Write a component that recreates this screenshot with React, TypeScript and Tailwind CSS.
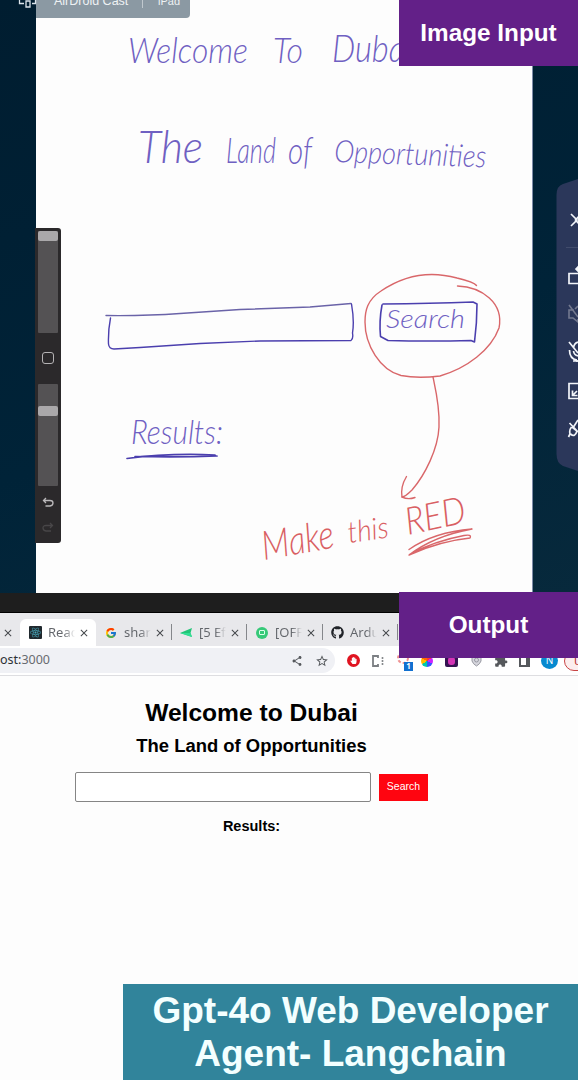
import type { ReactNode } from "react";
import { MdClose, MdShare, MdStarBorder, MdExtension } from "react-icons/md";
import { FcGoogle } from "react-icons/fc";
import { FaGithub, FaReact, FaHandPaper } from "react-icons/fa";

type InkWord = { text: string; x: number; y: number; w: number; size: number; angle?: number };

const blueWords: InkWord[] = [
  { text: "Welcome", x: 128, y: 63, w: 120, size: 36 },
  { text: "To", x: 273, y: 63, w: 30, size: 36 },
  { text: "Dubai", x: 332, y: 62, w: 80, size: 38 },
  { text: "The", x: 138, y: 163, w: 65, size: 46 },
  { text: "Land", x: 226, y: 163, w: 50, size: 36 },
  { text: "of", x: 288, y: 164, w: 24, size: 38 },
  { text: "Opportunities", x: 334, y: 162, w: 152, size: 31, angle: 2 },
  { text: "Search", x: 386, y: 328, w: 79, size: 26 },
  { text: "Results:", x: 131, y: 444, w: 92, size: 34 },
];

const redWords: InkWord[] = [
  { text: "Make", x: 264, y: 560, w: 73, size: 40, angle: -10 },
  { text: "this", x: 349, y: 543, w: 41, size: 30, angle: -8 },
  { text: "RED", x: 408, y: 535, w: 61, size: 38, angle: -12 },
];

function Ink({ words, color }: { words: InkWord[]; color: string }) {
  return (
    <g fill={color} fontFamily="Lato, 'Open Sans', sans-serif" fontStyle="italic" fontWeight={300}>
      {words.map((w) => (
        <text
          key={w.text}
          x={w.x}
          y={w.y}
          fontSize={w.size}
          textLength={w.w}
          lengthAdjust="spacingAndGlyphs"
          transform={`rotate(${w.angle ?? 0} ${w.x} ${w.y})`}
        >
          {w.text}
        </text>
      ))}
    </g>
  );
}

function Sketch() {
  return (
    <svg className="absolute inset-0" width="578" height="593" viewBox="0 0 578 593" fill="none" strokeLinecap="round" strokeLinejoin="round">
      <Ink words={blueWords} color="#6f60c2" />
      <Ink words={redWords} color="#d95f63" />
      <g stroke="#4b3fae" strokeWidth="1.4">
        <path d="M106 315.5Q145 316 180 313.500L240 309.500L310 307L351 303.500" stroke="#6a63a8" />
        <path d="M110.500 318Q108 331 108.500 344Q109 349 114 349L140 347.500L200 343.500L260 341L351 340.500Q353.500 339 352.500 333Q354.500 321 351.500 304" />
        <path d="M383 304Q430 303.500 473 302L477 304Q477 323 474.500 342L471 340.500Q430 341.500 388 340.500L380.500 336.500Q379 321 382 305" strokeWidth="1.6" />
        <path d="M127 458.500Q168 453 215 455M135 456.500Q180 457.500 217 456" strokeWidth="1.7" />
      </g>
      <g stroke="#d9676a" strokeWidth="1.4">
        <path d="M476.500 285.500Q474 282 457 278C428 270 403 276 381 291C367 300 365 311 365 322C365 345 380 370 401 375.500C414 378 427 377.500 440 376C467 368 491 350 499 328C504 303 482 287 457.500 286" />
        <path d="M433 377C436 391 440 408 439 427C438 449 425 475 412 490C408 494 404 497 402 497" />
        <path d="M406.500 476.500C402 484 401 491 402 497Q408 500 415 497.500" />
        <path d="M409 549.500Q434 532 472 529Q434 536 409 555Q440 541 470 538Q472 534 464 535.500Q435 541 410 554" />
      </g>
    </svg>
  );
}

function BrushPanel() {
  return (
    <div className="absolute left-[35px] top-[228px] flex h-[315px] w-[26px] flex-col items-center rounded-r-[3px] bg-[#2b292b] pt-[3px]">
      <div className="h-[102px] w-[20px] rounded-[1px] bg-[#545254]">
        <div className="h-[10px] w-full rounded-[2px] bg-[#aaa8aa]" />
      </div>
      <div className="mt-[19px] h-[12px] w-[12px] rounded-[3px] border border-[#b5b3b5]" />
      <div className="mt-[20px] h-[102px] w-[20px] rounded-[1px] bg-[#545254] pt-[22px]">
        <div className="h-[10px] w-full rounded-[2px] bg-[#aaa8aa]" />
      </div>
      <svg className="mt-[11px]" width="12" height="11" viewBox="0 0 12 11" fill="none" stroke="#bbb9bb" strokeWidth="1.3">
        <path d="M4 1L1.500 3.500L4 6M2 3.500H8Q11 3.500 11 6T8 9H3.500" />
      </svg>
      <svg className="mt-[14px]" width="12" height="11" viewBox="0 0 12 11" fill="none" stroke="#484648" strokeWidth="1.3">
        <path d="M8 1L10.500 3.500L8 6M10 3.500H4Q1 3.500 1 6T4 9H9" />
      </svg>
    </div>
  );
}

function CastPanel() {
  return (
    <svg className="absolute right-0 top-[177px]" width="22" height="296" viewBox="0 0 22 296" fill="none">
      <path d="M22 2L7 7Q0.500 9 0.500 18V277Q0.500 286 7 289L22 294Z" fill="#2b375a" />
      <path d="M10 70.500H22" stroke="#414c6c" />
      <g stroke="#f2f5fa" strokeWidth="1.7">
        <path d="M15 37L21 43L15 49M24 38L19.500 43L24 48" />
        <path d="M22 96.500H13V106.500H22" />
        <path d="M20 92L22.500 89.500V94.500Z" fill="#f2f5fa" />
        <path d="M13 165L22 176M22 165Q18 166 17.500 171M13.500 173Q13.500 182 21 183M17.500 174Q18 178 22 179M21 183V185M17 184H22" />
        <path d="M22 206.500H13V221.500H22M16.500 213.500V218.500H21.500M17 218L21 214" />
        <path d="M13.500 246L22 255M22 243L17.500 250M15.500 250Q13 253 14 257L12.500 260M14.500 257Q19 261 21 254M16 250L21 254" />
      </g>
      <path d="M13 128L22 140M22 129L19 132M18 133H13V141H17L22 145V142" stroke="#73798f" strokeWidth="1.600" />
    </svg>
  );
}

function Whiteboard() {
  return (
    <section className="relative h-[593px] w-full overflow-hidden bg-[linear-gradient(160deg,#001d30,#002338_60%,#07293c)] pl-[35.500px]">
      <div className="h-full w-[497px] border-r border-[#7d8ba8] bg-[#fdfdfd]" />
      <div className="absolute left-[36px] top-0 h-[18px] w-[154px] rounded-br-[4px] bg-[#8b99a3]" />
      <svg className="absolute left-[18px] top-0" width="19" height="9" viewBox="0 0 19 9" fill="none" stroke="#dbe4eb" strokeWidth="1.300">
        <path d="M1.500 0V3.500H6M17.500 0V3.500H14M8 1H12V7H8Z" />
      </svg>
      <div className="absolute left-[54px] top-[-8px] flex h-[18px] items-center whitespace-nowrap text-[#eef2f4]">
        <span className="w-[88px] text-[12.500px]">AirDroid Cast</span>
        <span className="h-[14px] w-px bg-[#c0c8ce]" />
        <span className="ml-[15px] text-[11px]">iPad</span>
      </div>
      <Sketch />
      <BrushPanel />
      <CastPanel />
    </section>
  );
}

function Tab({ icon, label, className }: { icon: ReactNode; label: string; className: string }) {
  return (
    <div className={`flex h-[27px] shrink-0 items-center ${className}`}>
      <span className="flex w-[19px] shrink-0 items-center">{icon}</span>
      <span className="w-[27px] shrink-0 overflow-hidden whitespace-nowrap bg-[linear-gradient(90deg,#62656a_60%,transparent)] bg-clip-text text-[13px] text-transparent">
        {label}
      </span>
      <MdClose className="ml-[3px] shrink-0 text-[#45484c]" size={12} />
    </div>
  );
}

function Divider() {
  return <span className="-ml-px mb-[6px] h-[16px] w-px shrink-0 bg-[#85878b]" />;
}

function Browser() {
  return (
    <section className="h-[83px] w-full overflow-hidden font-['Noto_Sans',sans-serif]">
      <div className="h-[20px] border-b border-black bg-[#1e1e1e]" />
      <div className="flex h-[33px] items-end bg-[#e8e8eb]">
        <div className="flex h-[27px] w-[20px] shrink-0 items-center pl-[2px]">
          <MdClose className="text-[#45484c]" size={12} />
        </div>
        <Tab
          className="w-[76px] rounded-t-[6px] bg-white pl-[9px]"
          icon={
            <span className="flex h-[13px] w-[13px] items-center justify-center rounded-[1px] bg-[#20282e]">
              <FaReact size={11} color="#48aabd" />
            </span>
          }
          label="React App"
        />
        <Tab className="w-[76px] pl-[9px]" icon={<FcGoogle size={12} />} label="share" />
        <Divider />
        <Tab
          className="w-[75px] pl-[8px]"
          icon={
            <svg width="13" height="10" viewBox="0 0 13 10">
              <path d="M0 5L12 0L10.500 5L12 9Z" fill="#22c477" />
              <path d="M0 5L10.500 5L12 9Z" fill="#32df94" />
            </svg>
          }
          label="[5 Effective"
        />
        <Divider />
        <Tab
          className="w-[76px] pl-[9px]"
          icon={
            <span className="flex h-[12px] w-[12px] items-center justify-center rounded-full bg-[#36c978]">
              <span className="h-[5px] w-[6px] rounded-[1px] border border-[#dbffea]" />
            </span>
          }
          label="[OFFER"
        />
        <Divider />
        <Tab className="w-[75px] pl-[8px]" icon={<FaGithub size={13} color="#202328" />} label="Arduino" />
        <Divider />
      </div>
      <div className="flex h-[30px] items-center border-b border-[#dedee1] bg-white">
        <div className="flex h-[25px] w-[335px] shrink-0 items-center rounded-r-full bg-[#f0f1f5]">
          <span className="w-[291px] text-[12.500px] text-[#2d3034]">
            ost:<span className="text-[#686b70]">3000</span>
          </span>
          <MdShare className="text-[#55585c]" size={12} />
          <MdStarBorder className="ml-[12px] text-[#55585c]" size={14} />
        </div>
        <div className="flex shrink-0 items-center">
          <span className="ml-[12px] flex h-[13px] w-[13px] items-center justify-center rounded-full bg-[#e01420]">
            <FaHandPaper size={7} color="white" />
          </span>
          <span className="ml-[12px] flex items-center gap-[2px]">
            <svg width="7" height="12" viewBox="0 0 7 12" fill="none" stroke="#7c7f83" strokeWidth="1.800">
              <path d="M6 3V1H1V11H6V9" />
            </svg>
            <svg width="3" height="12" viewBox="0 0 3 12" fill="#7c7f83">
              <circle cx="1.500" cy="3" r="1" />
              <circle cx="1.500" cy="6" r="1" />
              <circle cx="1.500" cy="9" r="1" />
            </svg>
          </span>
          <span className="relative ml-[12px] h-[22px] w-[20px]">
            <svg width="18" height="22" viewBox="0 0 18 22" fill="none" stroke="#ef9292" strokeWidth="2" strokeDasharray="3 2">
              <circle cx="7" cy="8" r="5" />
            </svg>
            <span className="absolute left-[8px] top-[12px] flex h-[9px] w-[9px] items-center justify-center bg-[#1170d0] text-[8px] font-bold text-white">1</span>
          </span>
          <span className="ml-[5px] h-[12px] w-[12px] rounded-full bg-[conic-gradient(#f33_0_16%,#c2f_0_33%,#35f_0_50%,#00c8aa_0_66%,#fb0_0_83%,#f60_0)]" />
          <span className="ml-[12px] flex h-[13px] w-[13px] items-center justify-center rounded-[2px] bg-[#351452]">
            <span className="h-[8px] w-[7px] rounded-[3px] bg-[#d434b5]" />
          </span>
          <svg className="ml-[13px]" width="11" height="13" viewBox="0 0 11 13" fill="#d6d6dd" stroke="#9899a2">
            <path d="M1 1H10V7Q9 10 5.500 12Q2 10 1 7Z" />
            <circle cx="5.500" cy="6" r="2" />
          </svg>
          <MdExtension className="ml-[12px] text-[#55585c]" size={14} />
          <span className="ml-[11px] h-[12px] w-[11px] border-2 border-r-4 border-[#55585c]" />
          <span className="ml-[11px] flex h-[17px] w-[17px] shrink-0 items-center justify-center rounded-full bg-[#0789cf] text-[10px] text-white">N</span>
          <span className="ml-[6px] h-[20px] w-[40px] shrink-0 rounded-full border border-[#c84444] bg-[#fceeee] pl-[9px] text-[11px] leading-[18px] text-[#b32c2c]">U</span>
        </div>
      </div>
    </section>
  );
}

function ResultPage() {
  return (
    <main className="flex w-[503px] flex-col items-center text-black">
      <h1 className="mt-[21px] text-[24.600px] font-bold leading-[32px]">Welcome to Dubai</h1>
      <h2 className="mt-[5px] text-[18.450px] font-bold leading-[24px]">The Land of Opportunities</h2>
      <div className="mt-[14px] flex items-center gap-[8px]">
        <input className="h-[30px] w-[296px] rounded-[2px] border border-[#858585] bg-white" aria-label="Search" />
        <button className="h-[27px] w-[49px] bg-[#ff0510] text-[10.500px] text-white">Search</button>
      </div>
      <h3 className="mt-[14px] text-[14.500px] font-bold leading-[20px]">Results:</h3>
    </main>
  );
}

export default function App() {
  return (
    <div className="relative h-[1080px] w-[578px] overflow-hidden bg-[#fdfdfd] font-['Liberation_Sans',Arial,sans-serif]">
      <Whiteboard />
      <Browser />
      <ResultPage />
      <div className="absolute right-0 top-0 flex h-[66px] w-[179px] items-center justify-center bg-[#632088] text-[24.300px] font-bold text-white">
        Image Input
      </div>
      <div className="absolute right-0 top-[592px] flex h-[66px] w-[179px] items-center justify-center bg-[#632088] text-[24.300px] font-bold text-white">
        Output
      </div>
      <div className="absolute bottom-0 right-0 flex h-[96px] w-[455px] flex-col items-center justify-center bg-[#31849b] text-center text-[37px] font-bold leading-[43px] text-[#f3ffff]">
        <span>Gpt-4o Web Developer</span>
        <span>Agent- Langchain</span>
      </div>
    </div>
  );
}
